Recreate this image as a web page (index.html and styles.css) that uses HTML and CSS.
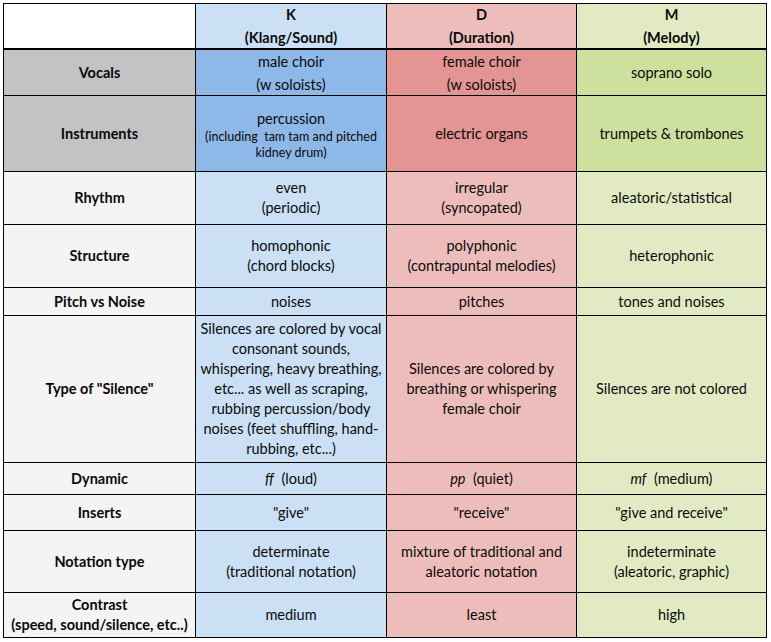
FILE: index.html
```html
<!DOCTYPE html>
<html>
<head>
<meta charset="utf-8">
<link rel="stylesheet" href="styles.css">
</head>
<body>
<div class="sheet">
  <div class="cell head blank"></div>
  <div class="cell head k tall">K<br>(Klang/Sound)</div>
  <div class="cell head d tall">D<br>(Duration)</div>
  <div class="cell head m tall">M<br>(Melody)</div>

  <div class="cell label gray">Vocals</div>
  <div class="cell kd tall">male choir<br>(w soloists)</div>
  <div class="cell dd tall">female choir<br>(w soloists)</div>
  <div class="cell md">soprano solo</div>

  <div class="cell label gray">Instruments</div>
  <div class="cell kd"><span class="main">percussion</span><span class="small">(including&nbsp; tam tam and pitched<br>kidney drum)</span></div>
  <div class="cell dd">electric organs</div>
  <div class="cell md">trumpets &amp; trombones</div>

  <div class="cell label">Rhythm</div>
  <div class="cell k">even<br>(periodic)</div>
  <div class="cell d">irregular<br>(syncopated)</div>
  <div class="cell m">aleatoric/statistical</div>

  <div class="cell label">Structure</div>
  <div class="cell k">homophonic<br>(chord blocks)</div>
  <div class="cell d">polyphonic<br>(contrapuntal melodies)</div>
  <div class="cell m">heterophonic</div>

  <div class="cell label">Pitch vs Noise</div>
  <div class="cell k">noises</div>
  <div class="cell d">pitches</div>
  <div class="cell m">tones and noises</div>

  <div class="cell label">Type of "Silence"</div>
  <div class="cell k">Silences are colored by vocal<br>consonant sounds,<br>whispering, heavy breathing,<br>etc... as well as scraping,<br>rubbing percussion/body<br>noises (feet shuffling, hand-<br>rubbing, etc...)</div>
  <div class="cell d">Silences are colored by<br>breathing or whispering<br>female choir</div>
  <div class="cell m">Silences are not colored</div>

  <div class="cell label">Dynamic</div>
  <div class="cell k"><span><i>ff</i>&nbsp; (loud)</span></div>
  <div class="cell d"><span><i>pp</i>&nbsp; (quiet)</span></div>
  <div class="cell m"><span><i>mf</i>&nbsp; (medium)</span></div>

  <div class="cell label">Inserts</div>
  <div class="cell k">"give"</div>
  <div class="cell d">"receive"</div>
  <div class="cell m">"give and receive"</div>

  <div class="cell label">Notation type</div>
  <div class="cell k">determinate<br>(traditional notation)</div>
  <div class="cell d">mixture of traditional and<br>aleatoric notation</div>
  <div class="cell m">indeterminate<br>(aleatoric, graphic)</div>

  <div class="cell label">Contrast<br>(speed, sound/silence, etc..)</div>
  <div class="cell k">medium</div>
  <div class="cell d">least</div>
  <div class="cell m">high</div>
</div>
</body>
</html>
```
FILE: styles.css
```css
html, body {
  margin: 0;
  padding: 0;
  background: #ffffff;
}
body {
  padding: 3px;
  font-family: "Lato", "Liberation Sans", sans-serif;
  font-size: 14.5px;
  color: #0a0a0a;
}
.sheet {
  display: inline-grid;
  grid-template-columns: 191px 190px 189px 189px;
  grid-template-rows: 45px 45px 75px 52px 62px 27px 146px 31px 35px 61px 44px;
  gap: 1px;
  padding: 1px;
  background: #000000;
}
.cell {
  display: flex;
  flex-direction: column;
  justify-content: center;
  align-items: center;
  text-align: center;
  line-height: 20px;
  box-sizing: border-box;
  overflow: hidden;
}
.tall {
  line-height: 23px;
}
.head {
  font-weight: bold;
  border-bottom: 1px solid #000000;
}
.blank { background: #ffffff; }
.label {
  font-weight: bold;
  background: #f4f4f4;
}
.gray { background: #c3c3c3; }
.k { background: #cbe0f4; }
.d { background: #edbdbc; }
.m { background: #e2eac4; }
.kd { background: #8db8e8; }
.dd { background: #e39493; }
.md { background: #cde09d; }
.main {
  line-height: 20px;
  margin-top: 2px;
}
.small {
  font-size: 12.5px;
  line-height: 16px;
}
```
